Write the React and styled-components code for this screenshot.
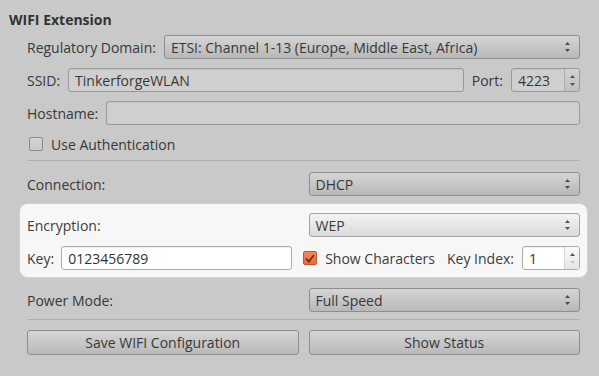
import styled, { createGlobalStyle, css } from 'styled-components';

const GlobalStyle = createGlobalStyle`
  html, body {
    margin: 0;
    padding: 0;
    background: #c9c9c9;
  }
  body {
    font-family: 'Open Sans', 'Liberation Sans', sans-serif;
    font-size: 14px;
    color: #383838;
  }
`;

const Page = styled.div`
  width: 599px;
  height: 376px;
  box-sizing: border-box;
  padding: 11px 19px 0 9px;
  overflow: hidden;
`;

const Title = styled.div`
  font-weight: 700;
  line-height: 18px;
  height: 18px;
  color: #333;
`;

const Form = styled.div`
  display: flex;
  flex-direction: column;
  padding-left: 18px;
  margin-top: 6px;
`;

const Row = styled.div`
  display: flex;
  align-items: center;
  gap: 8px;
  height: 24px;
  margin-top: ${({ $top = 0 }) => $top}px;
`;

const Pair = styled.div`
  display: grid;
  grid-template-columns: 1fr 1fr;
  column-gap: 10px;
  align-items: center;
  height: ${({ $h = 24 }) => $h}px;
  margin-top: ${({ $top = 0 }) => $top}px;
`;

const Label = styled.span`
  white-space: nowrap;
  margin-left: ${({ $ml = 0 }) => $ml}px;
  color: ${({ $lit }) => ($lit ? '#3c3c3c' : '#383838')};
`;

const fieldBase = css`
  box-sizing: border-box;
  height: 24px;
  border-radius: 3px;
  display: flex;
  align-items: center;
  padding-left: 6px;
  white-space: nowrap;
  overflow: hidden;
`;

const Combo = styled.div`
  ${fieldBase};
  flex: 1;
  justify-content: space-between;
  padding-right: 8px;
  border: 1px solid ${({ $lit }) => ($lit ? '#a3a3a3' : '#8e8e8e')};
  background: ${({ $lit }) =>
    $lit
      ? 'linear-gradient(#f4f4f4, #dadada)'
      : 'linear-gradient(#d5d5d5, #b8b8b8)'};
  color: ${({ $lit }) => ($lit ? '#3c3c3c' : '#383838')};
`;

const Field = styled.div`
  ${fieldBase};
  flex: ${({ $w }) => ($w ? `0 0 ${$w}px` : '1')};
  margin-left: ${({ $ml = 0 }) => $ml}px;
  border: 1px solid ${({ $lit }) => ($lit ? '#ababab' : '#999')};
  background: ${({ $lit }) => ($lit ? '#fff' : '#cfcfcf')};
  box-shadow: inset 0 1px 1px
    ${({ $lit }) => ($lit ? 'rgba(0,0,0,0.06)' : 'rgba(0,0,0,0.05)')};
  padding-right: 0;
  color: ${({ $lit }) => ($lit ? '#333' : '#383838')};
`;

const SpinValue = styled.span`
  flex: 1;
`;

const SpinButtons = styled.div`
  align-self: stretch;
  width: 15px;
  border-left: 1px solid ${({ $lit }) => ($lit ? '#d4d4d4' : '#adadad')};
  background: ${({ $lit }) =>
    $lit ? 'linear-gradient(#fafafa, #e6e6e6)' : 'linear-gradient(#d2d2d2, #c0c0c0)'};
  display: flex;
  flex-direction: column;
  align-items: center;
  justify-content: space-between;
  padding: 6px 0 5px;
  box-sizing: border-box;
`;

const Separator = styled.div`
  height: 1px;
  background: #b0b0b0;
  margin-top: ${({ $top = 0 }) => $top}px;
`;

const CheckRow = styled.label`
  display: flex;
  align-items: center;
  gap: 8px;
  height: 20px;
  margin-top: 9px;
  padding-left: 2px;
`;

const Box = styled.span`
  box-sizing: border-box;
  width: 14px;
  height: 14px;
  border-radius: 2px;
  flex: 0 0 14px;
  margin-left: ${({ $ml = 0 }) => $ml}px;
  display: flex;
  align-items: center;
  justify-content: center;
  ${({ $checked }) =>
    $checked
      ? css`
          border: 1px solid #c4552a;
          background: linear-gradient(#f58a5c, #e8693b);
        `
      : css`
          border: 1px solid #8c8c8c;
          background: linear-gradient(#d4d4d4, #c9c9c9);
        `}
`;

const Panel = styled.div`
  margin: 8px -7px 0;
  padding: 9px 7px 7px;
  background: #f7f7f7;
  border-radius: 8px;
  display: flex;
  flex-direction: column;
  gap: 9px;
  box-shadow: 0 0 2px rgba(255, 255, 255, 0.6);
`;

const KeyRow = styled.div`
  display: flex;
  align-items: center;
  height: 24px;
`;

const SpinSlot = styled.div`
  display: flex;
  margin-left: 8px;
`;

const Button = styled.button`
  box-sizing: border-box;
  height: 25px;
  border: 1px solid #8e8e8e;
  border-radius: 3px;
  background: linear-gradient(#d5d5d5, #b9b9b9);
  font: inherit;
  color: #383838;
  padding: 0;
`;

const ComboArrows = ({ lit }) => (
  <svg width="7" height="12" viewBox="0 0 7 12">
    <path d="M3.5 1 L6 4 L1 4 Z" fill={lit ? '#555' : '#4a4a4a'} />
    <path d="M1 8 L6 8 L3.5 11 Z" fill={lit ? '#555' : '#4a4a4a'} />
  </svg>
);

const Tri = ({ down, faint }) => (
  <svg width="5" height="3" viewBox="0 0 5 3">
    <path d={down ? 'M0 0 L5 0 L2.5 3 Z' : 'M2.5 0 L5 3 L0 3 Z'} fill={faint ? '#c4c4c4' : '#555'} />
  </svg>
);

const Spin = ({ value, width, lit, atMin }) => (
  <Field $w={width} $lit={lit}>
    <SpinValue>{value}</SpinValue>
    <SpinButtons $lit={lit}>
      <Tri />
      <Tri down faint={atMin} />
    </SpinButtons>
  </Field>
);

const Check = () => (
  <svg width="10" height="9" viewBox="0 0 10 9">
    <path d="M1 4.5 L3.8 7.5 L9 1" fill="none" stroke="#6e2f12" strokeWidth="1.8" />
  </svg>
);

export default function App() {
  return (
    <Page>
      <GlobalStyle />
      <Title>WIFI Extension</Title>
      <Form>
        <Row>
          <Label>Regulatory Domain:</Label>
          <Combo>
            <span>ETSI: Channel 1-13 (Europe, Middle East, Africa)</span>
            <ComboArrows />
          </Combo>
        </Row>
        <Row $top={9}>
          <Label>SSID:</Label>
          <Field>TinkerforgeWLAN</Field>
          <Label>Port:</Label>
          <Spin value="4223" width={69} />
        </Row>
        <Row $top={9}>
          <Label>Hostname:</Label>
          <Field />
        </Row>
        <CheckRow>
          <Box />
          <span>Use Authentication</span>
        </CheckRow>
        <Separator $top={6} />
        <Pair $top={11}>
          <Label>Connection:</Label>
          <Combo>
            <span>DHCP</span>
            <ComboArrows />
          </Combo>
        </Pair>
        <Panel>
          <Pair>
            <Label $lit>Encryption:</Label>
            <Combo $lit>
              <span>WEP</span>
              <ComboArrows lit />
            </Combo>
          </Pair>
          <KeyRow>
            <Label $lit>Key:</Label>
            <Field $lit $ml={7}>0123456789</Field>
            <Box $checked $ml={11}>
              <Check />
            </Box>
            <Label $lit $ml={8}>Show Characters</Label>
            <Label $lit $ml={12}>Key Index:</Label>
            <SpinSlot>
              <Spin value="1" width={58} lit atMin />
            </SpinSlot>
          </KeyRow>
        </Panel>
        <Pair $top={11}>
          <Label>Power Mode:</Label>
          <Combo>
            <span>Full Speed</span>
            <ComboArrows />
          </Combo>
        </Pair>
        <Separator $top={7} />
        <Pair $top={10} $h={25}>
          <Button>Save WIFI Configuration</Button>
          <Button>Show Status</Button>
        </Pair>
      </Form>
    </Page>
  );
}
